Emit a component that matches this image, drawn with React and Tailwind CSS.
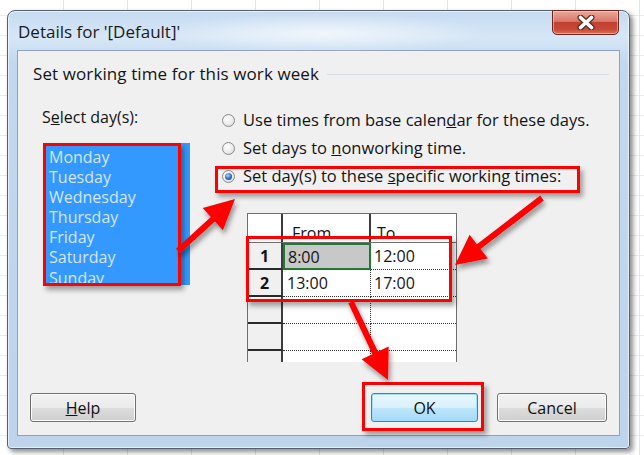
import React from "react";

function arrowPoints([x1, y1], [x2, y2], w = 6, hl = 30, hw = 15) {
  const dx = x2 - x1, dy = y2 - y1;
  const L = Math.hypot(dx, dy);
  const ux = dx / L, uy = dy / L;
  const nx = -uy, ny = ux;
  const bx = x2 - ux * hl, by = y2 - uy * hl;
  const pts = [
    [x1 + (nx * w) / 2, y1 + (ny * w) / 2],
    [bx + (nx * w) / 2, by + (ny * w) / 2],
    [bx + nx * hw, by + ny * hw],
    [x2, y2],
    [bx - nx * hw, by - ny * hw],
    [bx - (nx * w) / 2, by - (ny * w) / 2],
    [x1 - (nx * w) / 2, y1 - (ny * w) / 2],
  ];
  return pts.map((p) => p.map((v) => v.toFixed(1)).join(",")).join(" ");
}

function Radio({ checked }) {
  return (
    <span className="w-[13px] h-[13px] shrink-0 rounded-full border border-[#8a8a8a] bg-[radial-gradient(circle_at_40%_35%,#ffffff_0%,#e9e9e9_60%,#cfcfcf_100%)] flex items-center justify-center">
      {checked && (
        <span className="w-[7px] h-[7px] rounded-full bg-[radial-gradient(circle_at_40%_35%,#a8d8ff_0%,#2a6fb8_55%,#123f7a_100%)]" />
      )}
    </span>
  );
}

function Btn({ children, w, primary }) {
  return (
    <div
      className={
        "h-[29px] rounded-[3px] border flex items-center justify-center text-[16px] text-[#111] " +
        w +
        " " +
        (primary
          ? "border-[#3c7fb1] bg-[linear-gradient(#eaf6fd_0%,#d9f0fc_50%,#bee6fd_50%,#a7d9f5_100%)] shadow-[inset_0_0_0_1px_#9fe2ff]"
          : "border-[#707070] bg-[linear-gradient(#f2f2f2_0%,#ebebeb_50%,#dddddd_50%,#cfcfcf_100%)] shadow-[inset_0_0_0_1px_#fcfcfc]")
      }
    >
      {children}
    </div>
  );
}

const days = ["Monday", "Tuesday", "Wednesday", "Thursday", "Friday", "Saturday", "Sunday"];

export default function App() {
  return (
    <div className="w-[644px] h-[455px] relative overflow-hidden bg-white bg-[repeating-linear-gradient(90deg,transparent_0px,transparent_63px,#e4e4e4_63px,#e4e4e4_64px),repeating-linear-gradient(0deg,transparent_0px,transparent_19px,#ececec_19px,#ececec_20px)] font-['Open_Sans',sans-serif] pt-[10px] pl-[7px]">
      {/* window */}
      <div className="w-[623px] h-[439px] rounded-t-[8px] rounded-b-[4px] border border-[#55606c] bg-[linear-gradient(180deg,#c6dbf1_0%,#d6e6f6_6%,#c2d8ef_12%,#bdd4ec_100%)] shadow-[3px_3px_5px_rgba(0,0,0,0.45),inset_0_0_0_1px_rgba(255,255,255,0.6)] flex flex-col relative">
        <div className="absolute left-[150px] top-[2px] w-[330px] h-[40px] rounded-full bg-[radial-gradient(ellipse_at_center,rgba(255,255,255,0.65)_0%,rgba(255,255,255,0)_70%)]" />
        {/* title bar */}
        <div className="h-[39px] flex justify-between relative">
          <div className="self-center pl-[10px] pt-[2px] text-[17px] text-[#1a1a1a] leading-[22px]">
            Details for '[Default]'
          </div>
          <div className="mr-[10px] mt-[-1px] w-[67px] h-[25px] rounded-b-[5px] border border-[#6b2620] bg-[linear-gradient(#e9a99b_0%,#d8786a_45%,#c4402f_50%,#c64a38_80%,#d8705a_100%)] shadow-[inset_0_0_0_1px_rgba(255,220,210,0.5)] flex items-center justify-center">
            <svg width="20" height="15" viewBox="0 0 20 15">
              <path d="M4.5 2.5 L15.5 12.5 M15.5 2.5 L4.5 12.5" stroke="#5a2a25" strokeWidth="6" strokeLinecap="round" />
              <path d="M4.5 2.5 L15.5 12.5 M15.5 2.5 L4.5 12.5" stroke="#ffffff" strokeWidth="3.6" strokeLinecap="round" />
            </svg>
          </div>
        </div>
        {/* client */}
        <div className="mx-[9px] h-[386px] border border-[#8ea2b8] bg-[#f0f0f0] flex flex-col text-[#141414] text-[16px] leading-[20px]">
          <div className="mt-[13px] flex items-center pl-[15px]">
            <span className="text-[17px] tracking-[0.1px]">Set working time for this work week</span>
            <span className="flex-1 h-px bg-[#d5dde5] ml-[8px] mr-[10px]" />
          </div>
          <div className="mt-[22px] flex">
            {/* left column */}
            <div className="w-[204px] shrink-0">
              <div className="pl-[24px] mt-[1px]">
                S<span className="underline">e</span>lect day(s):
              </div>
              <div className="ml-[25px] mt-[16px] w-[147px] h-[142px] bg-[#3399ff] overflow-hidden pt-[4px] text-[#d6e6fa]">
                {days.map((d) => (
                  <div
                    key={d}
                    className={
                      "h-[20px] pl-[6px] leading-[20px] text-[16px] " +
                      (d === "Sunday" ? "border-t border-r border-dotted border-[#b07b45] leading-[18px]" : "")
                    }
                  >
                    {d}
                  </div>
                ))}
              </div>
            </div>
            {/* right column */}
            <div className="flex-1 text-[16.5px]">
              <div className="h-[28px] flex items-center gap-[8px]">
                <Radio />
                <span>
                  Use times from base calen<span className="underline">d</span>ar for these days.
                </span>
              </div>
              <div className="h-[28px] flex items-center gap-[8px]">
                <Radio />
                <span>
                  Set days to <span className="underline">n</span>onworking time.
                </span>
              </div>
              <div className="h-[28px] flex items-center gap-[8px]">
                <Radio checked />
                <span>
                  Set day(s) to these <span className="underline">s</span>pecific working times:
                </span>
              </div>
              {/* table */}
              <div className="ml-[25px] mt-[23px] w-[210px] h-[149px] overflow-hidden border-l border-r border-t border-[#6e6e6e] bg-white text-[16px]">
                <div className="flex h-[29px] border-b border-[#6e6e6e] bg-white">
                  <div className="w-[35px] border-r-2 border-[#3c3c3c]" />
                  <div className="w-[88px] border-r-2 border-[#3c3c3c] pl-[9px] pt-[9px]">From</div>
                  <div className="flex-1 pl-[6px] pt-[9px]">To</div>
                </div>
                {[
                  ["1", "8:00", "12:00"],
                  ["2", "13:00", "17:00"],
                  ["", "", ""],
                  ["", "", ""],
                  ["", "", ""],
                ].map((r, i) => (
                  <div key={i} className="flex h-[27px]">
                    <div className="w-[35px] border-r-2 border-[#3c3c3c] border-b-2 border-b-[#2a2a2a] bg-[#f0f0f0] flex items-center justify-center font-bold">
                      {r[0]}
                    </div>
                    {i === 0 ? (
                      <div className="w-[88px] border-2 border-[#1f7a32] bg-[#c8c8c8] pl-[3px] flex items-center">
                        {r[1]}
                      </div>
                    ) : (
                      <div className="w-[88px] border-r border-b border-dotted border-[#333] pl-[4px] flex items-center">
                        {r[1]}
                      </div>
                    )}
                    <div className="flex-1 border-b border-dotted border-[#333] pl-[3px] flex items-center">
                      {r[2]}
                    </div>
                  </div>
                ))}
              </div>
            </div>
          </div>
          <div className="mt-auto mb-[13px] flex justify-between px-[12px]">
            <Btn w="w-[106px]">
              <span>
                <span className="underline">H</span>elp
              </span>
            </Btn>
            <div className="flex gap-[19px]">
              <Btn w="w-[107px]" primary>
                OK
              </Btn>
              <Btn w="w-[110px]">Cancel</Btn>
            </div>
          </div>
        </div>
      </div>

      {/* annotation overlays */}
      <div className="absolute left-[43px] top-[143px] w-[138px] h-[143px] border-[3px] border-[#ff0000] shadow-[3px_4px_5px_rgba(0,0,0,0.35)]" />
      <div className="absolute left-[215px] top-[166px] w-[365px] h-[27px] border-[3px] border-[#ff0000] shadow-[3px_4px_5px_rgba(0,0,0,0.35)]" />
      <div className="absolute left-[246px] top-[236px] w-[206px] h-[66px] border-[3px] border-[#ff0000] shadow-[3px_4px_5px_rgba(0,0,0,0.35)]" />
      <div className="absolute left-[362px] top-[382px] w-[122px] h-[49px] border-[3px] border-[#ff0000] shadow-[3px_4px_5px_rgba(0,0,0,0.35)]" />
      <svg className="absolute left-0 top-0" width="644" height="455" viewBox="0 0 644 455">
        <defs>
          <filter id="sh" x="-20%" y="-20%" width="140%" height="140%">
            <feDropShadow dx="2" dy="4" stdDeviation="2.5" floodColor="#000" floodOpacity="0.4" />
          </filter>
        </defs>
        <g fill="#ff0000" filter="url(#sh)">
          <polygon points={arrowPoints([178, 251], [235, 199])} />
          <polygon points={arrowPoints([542, 198], [455, 265])} />
          <polygon points={arrowPoints([351, 302], [388, 380])} />
        </g>
      </svg>
    </div>
  );
}
